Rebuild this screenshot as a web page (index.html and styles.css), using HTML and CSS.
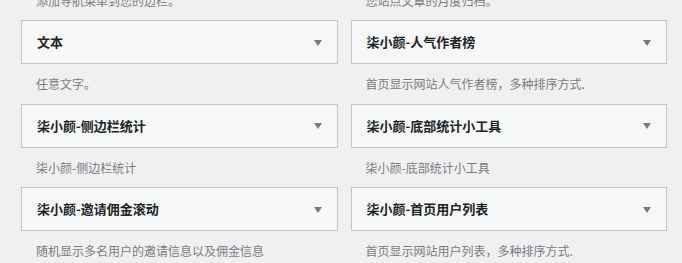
FILE: index.html
```html
<!DOCTYPE html>
<html lang="zh-CN">
<head>
<meta charset="utf-8">
<title>小工具</title>
<link rel="stylesheet" href="styles.css">
</head>
<body>
<div class="widget-list">
  <div class="widget">
    <div class="widget-top"><h3 class="widget-title">导航菜单</h3><span class="arrow"></span></div>
    <div class="widget-description">添加导航菜单到您的边栏。</div>
  </div>
  <div class="widget">
    <div class="widget-top"><h3 class="widget-title">文章归档</h3><span class="arrow"></span></div>
    <div class="widget-description">您站点文章的月度归档。</div>
  </div>
  <div class="widget">
    <div class="widget-top"><h3 class="widget-title">文本</h3><span class="arrow"></span></div>
    <div class="widget-description">任意文字。</div>
  </div>
  <div class="widget">
    <div class="widget-top"><h3 class="widget-title">柒小颜-人气作者榜</h3><span class="arrow"></span></div>
    <div class="widget-description">首页显示网站人气作者榜，多种排序方式.</div>
  </div>
  <div class="widget">
    <div class="widget-top"><h3 class="widget-title">柒小颜-侧边栏统计</h3><span class="arrow"></span></div>
    <div class="widget-description">柒小颜-侧边栏统计</div>
  </div>
  <div class="widget">
    <div class="widget-top"><h3 class="widget-title">柒小颜-底部统计小工具</h3><span class="arrow"></span></div>
    <div class="widget-description">柒小颜-底部统计小工具</div>
  </div>
  <div class="widget">
    <div class="widget-top"><h3 class="widget-title">柒小颜-邀请佣金滚动</h3><span class="arrow"></span></div>
    <div class="widget-description">随机显示多名用户的邀请信息以及佣金信息</div>
  </div>
  <div class="widget">
    <div class="widget-top"><h3 class="widget-title">柒小颜-首页用户列表</h3><span class="arrow"></span></div>
    <div class="widget-description">首页显示网站用户列表，多种排序方式.</div>
  </div>
</div>
</body>
</html>
```

FILE: styles.css
```css
html, body {
  margin: 0;
  padding: 0;
  background: #f0f0f1;
  overflow: hidden;
}

body {
  font-family: "Noto Sans CJK SC", "Liberation Sans", sans-serif;
  font-size: 13px;
  color: #3c434a;
}

.widget-list {
  display: grid;
  grid-template-columns: 1fr 1fr;
  column-gap: 13px;
  padding: 0 15px 0 21px;
  margin-top: -63.5px;
}

.widget-top {
  display: flex;
  align-items: center;
  justify-content: space-between;
  height: 42px;
  padding: 0 15px;
  background: #f6f7f7;
  border: 1px solid #c3c4c7;
}

.widget-title {
  margin: 0;
  font-size: 13px;
  font-weight: 700;
  line-height: 18px;
  color: #1d2327;
}

.arrow {
  width: 0;
  height: 0;
  border-left: 4px solid transparent;
  border-right: 4px solid transparent;
  border-top: 6px solid #787c82;
  margin-top: 1px;
}

.widget-description {
  padding: 10px 0 10px 15px;
  font-size: 12px;
  line-height: 19.5px;
  color: #787c82;
  white-space: nowrap;
}
```
